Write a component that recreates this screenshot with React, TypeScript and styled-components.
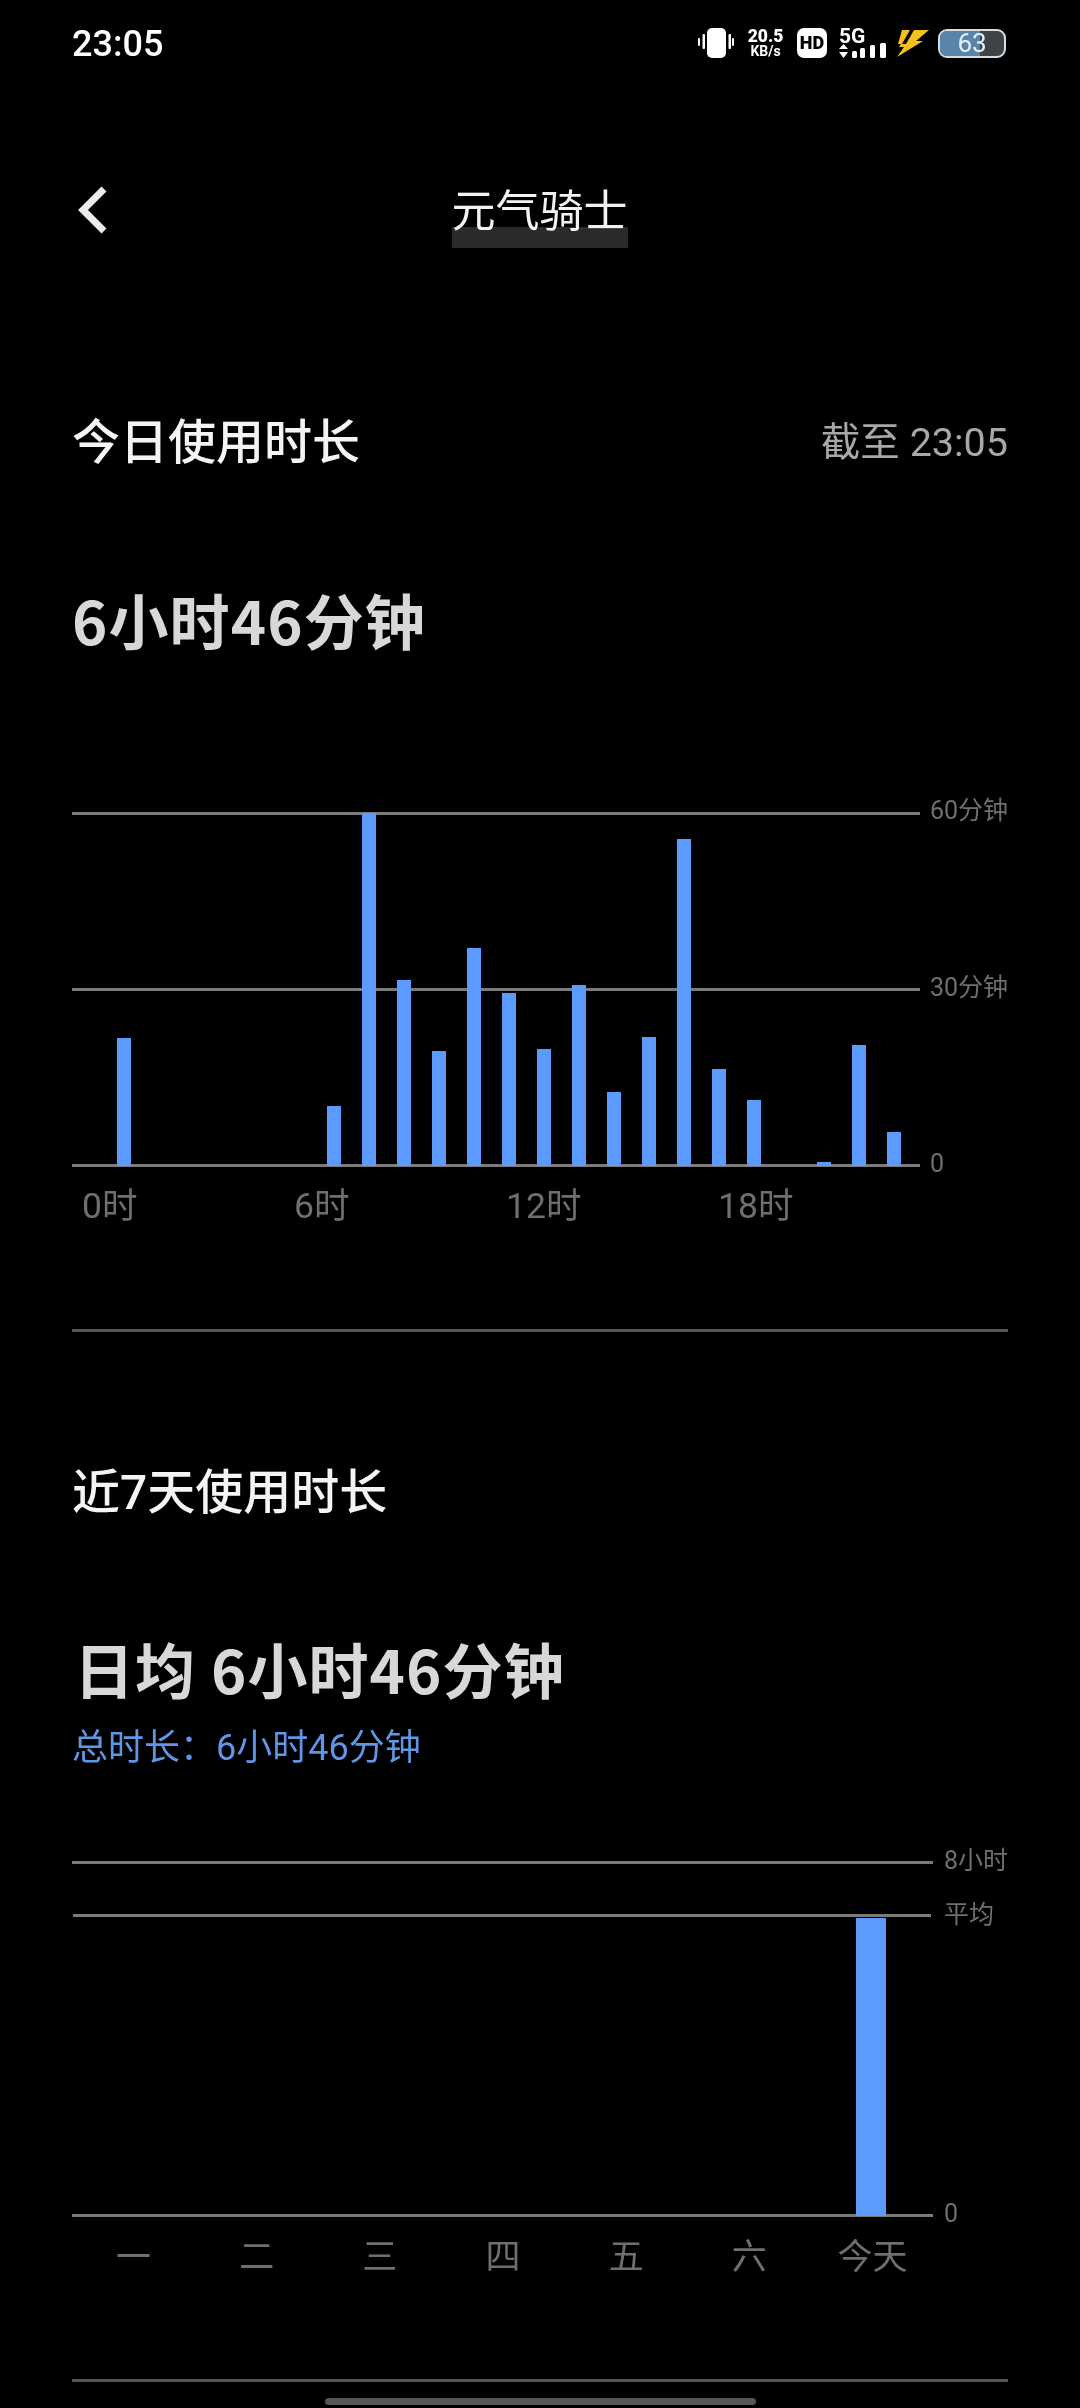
import styled, { createGlobalStyle } from 'styled-components';

const CJK = `'Noto Sans CJK SC', 'Noto Sans', sans-serif`;
const LATIN_CJK = `Roboto, 'Noto Sans CJK SC', sans-serif`;

const hourBars = [128, 0, 0, 0, 0, 0, 60, 353, 186, 115, 218, 173, 117, 181, 74, 129, 327, 97, 66, 0, 4, 121, 34];
const hourLabels = ['0时', '6时', '12时', '18时'];
const dayLabels = ['一', '二', '三', '四', '五', '六', '今天'];

export default function App() {
  return (
    <Page>
      <GlobalStyle />
      <StatusBar>
        <Clock>23:05</Clock>
        <StatusIcons>
          <svg width='37' height='30' viewBox='0 0 37 30'>
            <rect x='10' width='19' height='30' rx='5' fill='#fff' />
            <rect x='5.5' y='6' width='2.5' height='15' rx='1' fill='#fff' />
            <rect x='1' y='10' width='2' height='8' rx='1' fill='#fff' />
            <rect x='31.5' y='6' width='2.5' height='15' rx='1' fill='#fff' />
            <rect x='35' y='10' width='2' height='8' rx='1' fill='#fff' />
          </svg>
          <NetSpeed>
            <b>20.5</b>
            <span>KB/s</span>
          </NetSpeed>
          <HdBadge>HD</HdBadge>
          <SignalBlock>
            <FiveG>5G</FiveG>
            <svg width='47' height='15' viewBox='0 0 47 15'>
              <path d='M0 6L4.5 1L9 6Z M0 9H9L4.5 15Z' fill='#fff' />
              <rect x='13' y='8' width='5' height='7' rx='1.5' fill='#fff' />
              <rect x='21' y='5' width='5' height='10' rx='1.5' fill='#fff' />
              <rect x='31' y='2' width='5' height='13' rx='1.5' fill='#fff' />
              <rect x='41' y='0' width='6' height='15' rx='1.5' fill='#fff' />
            </svg>
          </SignalBlock>
          <BoltIcon width='33' height='27' viewBox='0 0 33 27'>
            <path d='M6 0H14L6 14H2Z' fill='#f2c21a' />
            <path d='M18 0H33L20 11H27L1 27L8 17H3L5 14H10Z' fill='#f2c21a' />
          </BoltIcon>
          <Battery>
            <BatteryFill $level={63} />
            <BatteryText>63</BatteryText>
          </Battery>
        </StatusIcons>
      </StatusBar>

      <NavBar>
        <BackIcon width='30' height='48' viewBox='0 0 30 48'>
          <path d='M27 3L6 24L27 45' fill='none' stroke='#ececec' strokeWidth='7' />
        </BackIcon>
        <Title>元气骑士</Title>
      </NavBar>

      <TodayHead>
        <SectionTitle>今日使用时长</SectionTitle>
        <AsOf>截至 23:05</AsOf>
      </TodayHead>
      <BigValue $top={104}>6小时46分钟</BigValue>

      <HourChart>
        <Plot>
          <GridLine />
          <GridLine />
          <GridLine />
          <HourBars>
            {hourBars.map((h, i) => (
              <HourBar key={i} style={{ height: h }} />
            ))}
          </HourBars>
        </Plot>
        <HourScale>
          <ScaleLabel>60分钟</ScaleLabel>
          <ScaleLabel>30分钟</ScaleLabel>
          <ScaleLabel>0</ScaleLabel>
        </HourScale>
      </HourChart>
      <HourAxis>
        {hourLabels.map((label) => (
          <AxisLabel key={label}>{label}</AxisLabel>
        ))}
      </HourAxis>
      <Divider $top={103} />

      <WeekHead>
        <SectionTitle>近7天使用时长</SectionTitle>
      </WeekHead>
      <BigValue $top={103} $indent={2}>日均 6小时46分钟</BigValue>
      <Total>总时长：6小时46分钟</Total>

      <WeekChart>
        <WeekPlot>
          <GridLine />
          <AverageLine />
          <ZeroLine />
          <WeekBars>
            {dayLabels.map((day, i) => (
              <WeekSlot key={day}>{i === 6 && <WeekBar style={{ height: 298 }} />}</WeekSlot>
            ))}
          </WeekBars>
        </WeekPlot>
        <WeekScale>
          <ScaleLabel>8小时</ScaleLabel>
          <AverageLabel>平均</AverageLabel>
          <ZeroLabel>0</ZeroLabel>
        </WeekScale>
      </WeekChart>
      <WeekAxis>
        {dayLabels.map((day) => (
          <DayLabel key={day}>{day}</DayLabel>
        ))}
      </WeekAxis>
      <Divider $top={105} />
      <HomeIndicator />
    </Page>
  );
}

const GlobalStyle = createGlobalStyle`
  html, body {
    margin: 0;
    background: #000;
  }
`;

const Page = styled.div`
  width: 1080px;
  height: 2408px;
  box-sizing: border-box;
  padding: 0 72px;
  background: #000;
  overflow: hidden;
  display: flex;
  flex-direction: column;
  font-family: ${CJK};
`;

const StatusBar = styled.div`
  height: 86px;
  flex: none;
  display: flex;
  align-items: center;
  justify-content: space-between;
  margin-right: 2px;
`;

const Clock = styled.span`
  font: 500 36px/40px Roboto, sans-serif;
  color: #fff;
  margin-top: 2px;
`;

const StatusIcons = styled.div`
  display: flex;
  align-items: center;
  margin-left: auto;
`;

const NetSpeed = styled.div`
  width: 35px;
  margin: 0 14px;
  display: flex;
  flex-direction: column;
  align-items: center;
  font-family: Roboto, sans-serif;
  color: #fff;
  font-weight: 700;
  b {
    font-size: 17.5px;
    line-height: 16px;
  }
  span {
    font-size: 14px;
    line-height: 15px;
  }
`;

const HdBadge = styled.div`
  width: 30px;
  height: 30px;
  border-radius: 7px;
  background: #fff;
  color: #000;
  font: 900 18px/30px Roboto, sans-serif;
  text-align: center;
`;

const SignalBlock = styled.div`
  display: flex;
  flex-direction: column;
  width: 47px;
  height: 30px;
  margin-left: 12px;
  svg {
    margin-top: -1px;
  }
`;

const FiveG = styled.span`
  font: 700 21px/16px Roboto, sans-serif;
  color: #fff;
`;

const BoltIcon = styled.svg`
  margin: 1px 0 0 10px;
`;

const Battery = styled.div`
  position: relative;
  width: 68px;
  height: 29px;
  margin-left: 9px;
  box-sizing: border-box;
  border: 2px solid #d6dde3;
  border-radius: 9px;
  background: #404346;
  overflow: hidden;
  display: flex;
  align-items: center;
  justify-content: center;
`;

const BatteryFill = styled.div<{ $level: number }>`
  position: absolute;
  left: 0;
  top: 0;
  bottom: 0;
  width: ${(p) => p.$level}%;
  background: #5a85aa;
`;

const BatteryText = styled.span`
  position: relative;
  font: 400 26px/26px Roboto, sans-serif;
  color: #e2f1fb;
`;

const NavBar = styled.div`
  margin-top: 79px;
  height: 90px;
  flex: none;
  display: flex;
  align-items: center;
  justify-content: center;
  position: relative;
`;

const BackIcon = styled.svg`
  position: absolute;
  left: 5px;
  top: 21px;
`;

const Title = styled.h1`
  margin: -4px 0 0 -1px;
  position: relative;
  font: 400 44px/56px ${CJK};
  color: #f2f2f2;
  &::before {
    content: '';
    position: absolute;
    left: 0;
    right: 0;
    top: 47px;
    height: 21px;
    background: #2b2b2b;
    mix-blend-mode: lighten;
  }
`;

const SectionHead = styled.div`
  height: 64px;
  flex: none;
  display: flex;
  align-items: center;
  justify-content: space-between;
`;

const TodayHead = styled(SectionHead)`
  margin-top: 156px;
`;

const WeekHead = styled(SectionHead)`
  margin-top: 129px;
`;

const SectionTitle = styled.h2`
  margin: 0;
  font: 500 48px/64px ${LATIN_CJK};
  color: #f4f4f4;
`;

const AsOf = styled.span`
  font: 400 39.5px/64px ${LATIN_CJK};
  color: #a8a8a8;
`;

const BigValue = styled.div<{ $top: number; $indent?: number }>`
  margin-top: ${(p) => p.$top}px;
  margin-left: ${(p) => p.$indent ?? 0}px;
  height: 80px;
  flex: none;
  font: 700 60px/80px ${CJK};
  letter-spacing: 1.1px;
  color: #d8d8d8;
  white-space: pre;
`;

const HourChart = styled.div`
  margin-top: 153px;
  display: flex;
  gap: 10px;
  flex: none;
`;

const Plot = styled.div`
  position: relative;
  width: 848px;
  height: 355px;
  display: flex;
  flex-direction: column;
  justify-content: space-between;
`;

const GridLine = styled.div`
  height: 3px;
  background: #7b7b7b;
`;

const HourBars = styled.div`
  position: absolute;
  inset: 0 0 1px 45px;
  display: flex;
  align-items: flex-end;
  gap: 21px;
`;

const HourBar = styled.div`
  width: 14px;
  background: #5b9bff;
`;

const ScaleLabel = styled.span`
  font: 400 25px/30px ${LATIN_CJK};
  color: #6f6f6f;
  white-space: nowrap;
`;

const HourScale = styled.div`
  margin: -16px 0 -12px;
  display: flex;
  flex-direction: column;
  justify-content: space-between;
`;

const HourAxis = styled.div`
  margin-top: 19px;
  padding-left: 10px;
  display: grid;
  grid-template-columns: repeat(4, 212px);
  flex: none;
`;

const AxisLabel = styled.span`
  font: 400 35.5px/40px ${LATIN_CJK};
  color: #6f6f6f;
`;

const Divider = styled.div<{ $top: number }>`
  margin-top: ${(p) => p.$top}px;
  height: 3px;
  flex: none;
  background: #545454;
`;

const Total = styled.div`
  margin-top: 16px;
  font: 400 36px/48px ${LATIN_CJK};
  color: #5f96e6;
  flex: none;
`;

const WeekChart = styled.div`
  margin-top: 89px;
  display: flex;
  gap: 11px;
  flex: none;
`;

const WeekPlot = styled.div`
  position: relative;
  width: 862px;
  height: 356px;
  display: flex;
  flex-direction: column;
`;

const AverageLine = styled(GridLine)`
  margin: 50px 2px 0 1px;
`;

const ZeroLine = styled(GridLine)`
  margin-top: auto;
`;

const WeekBars = styled.div`
  position: absolute;
  inset: 0 0 1px 0;
  display: grid;
  grid-template-columns: repeat(7, 1fr);
  align-items: end;
`;

const WeekSlot = styled.div`
  display: flex;
  justify-content: center;
`;

const WeekBar = styled.div`
  width: 30px;
  background: #5b9bff;
`;

const WeekScale = styled.div`
  margin: -15px 0 -12px;
  display: flex;
  flex-direction: column;
`;

const AverageLabel = styled(ScaleLabel)`
  margin-top: 24px;
`;

const ZeroLabel = styled(ScaleLabel)`
  margin-top: auto;
`;

const WeekAxis = styled.div`
  width: 862px;
  margin-top: 17px;
  display: grid;
  grid-template-columns: repeat(7, 1fr);
  flex: none;
`;

const DayLabel = styled.span`
  font: 400 35px/40px ${CJK};
  color: #6f6f6f;
  text-align: center;
`;

const HomeIndicator = styled.div`
  margin-top: 16px;
  align-self: center;
  width: 431px;
  height: 7px;
  flex: none;
  border-radius: 4px;
  background: #555;
`;
